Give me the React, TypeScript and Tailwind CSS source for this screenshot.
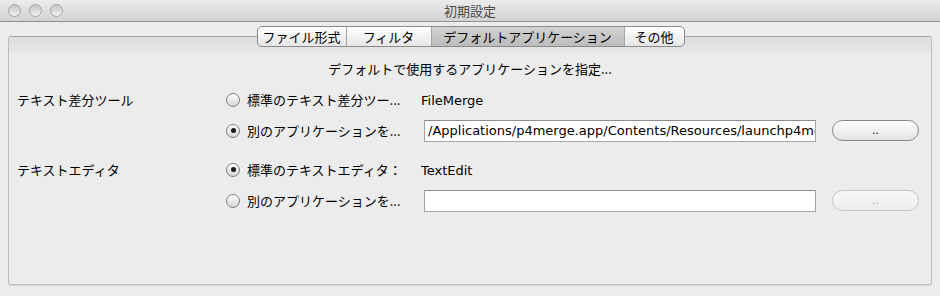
import type { ReactNode } from 'react'

const jp = 'font-["Noto_Sans_CJK_JP","Noto_Sans",sans-serif]'
const latin = 'font-["DejaVu_Sans","Noto_Sans_CJK_JP",sans-serif]'

function Radio({ checked, label }: { checked?: boolean; label: string }) {
  return (
    <div className="flex items-center gap-[7px] w-[195px] shrink-0">
      <span className="w-[14px] h-[14px] rounded-full border border-[#7e7e7e] bg-gradient-to-b from-[#ffffff] to-[#d6d6d6] flex items-center justify-center shrink-0">
        {checked && <span className="w-[5px] h-[5px] rounded-full bg-[#1a1a1a]" />}
      </span>
      <span className={`${jp} text-[13px] leading-none text-black whitespace-nowrap`}>{label}</span>
    </div>
  )
}

function PathField({ value }: { value?: string }) {
  return (
    <input
      readOnly
      value={value ?? ''}
      className={`${latin} ml-[3px] w-[392px] h-[22px] bg-white border border-[#a5a5a5] border-t-[#8c8c8c] pl-[3px] pr-0 text-[13px] text-black outline-none shrink-0`}
    />
  )
}

function Browse({ disabled }: { disabled?: boolean }) {
  return (
    <button
      className={`ml-[16px] w-[87px] h-[21px] rounded-full border flex items-center justify-center text-[11px] leading-none shrink-0 ${latin} ${
        disabled
          ? 'border-[#c4c4c4] bg-gradient-to-b from-[#f8f8f8] to-[#ececec] text-[#9a9a9a]'
          : 'border-[#858585] bg-gradient-to-b from-[#ffffff] to-[#e2e2e2] text-black'
      }`}
    >
      ..
    </button>
  )
}

function Row({ label, children }: { label?: string; children: ReactNode }) {
  return (
    <div className="flex items-center h-[31px]">
      <div className={`${jp} w-[209px] shrink-0 text-[13px] text-black whitespace-nowrap`}>{label}</div>
      {children}
    </div>
  )
}

const tabs = [
  { name: 'ファイル形式', w: 'w-[88px]' },
  { name: 'フィルタ', w: 'w-[85px]' },
  { name: 'デフォルトアプリケーション', w: 'w-[193px]', active: true },
  { name: 'その他', w: 'w-[60px]' },
]

export default function App() {
  return (
    <div className="w-[940px] h-[296px] bg-[#ececec] flex flex-col overflow-hidden">
      <div className="h-[22px] shrink-0 bg-gradient-to-b from-[#ececec] to-[#d2d2d2] border-b border-[#8f8f8f] relative flex items-center justify-center">
        <div className="absolute left-[8px] top-[4px] flex gap-[8px]">
          {[0, 1, 2].map((i) => (
            <span
              key={i}
              className="w-[13px] h-[13px] rounded-full border border-[#a3a3a3] bg-gradient-to-b from-[#c4c4c4] to-[#f2f2f2]"
            />
          ))}
        </div>
        <span className={`${jp} text-[13px] text-[#4a4a4a] leading-none`}>初期設定</span>
      </div>

      <div className="flex justify-center mt-[4px] relative z-10">
        <div className="flex h-[21px] rounded-[5px] border border-[#8a8a8a] overflow-hidden bg-gradient-to-b from-[#ffffff] to-[#e6e6e6] ml-[1px]">
          {tabs.map((t, i) => (
            <div
              key={t.name}
              className={`${t.w} ${jp} flex items-center justify-center text-[13px] text-black leading-none ${
                i > 0 ? 'border-l border-[#a6a6a6]' : ''
              } ${t.active ? 'bg-gradient-to-b from-[#d2d2d2] to-[#bcbcbc]' : ''}`}
            >
              {t.name}
            </div>
          ))}
        </div>
      </div>

      <div className="mx-[8px] -mt-[11px] h-[249px] border border-[#bdbdbd] border-t-[#a2a2a2] rounded-[3px] shadow-[0_1px_0_#dadada] flex flex-col">
        <div className="h-[16px] bg-gradient-to-b from-[#dedede] to-[#e6e6e6] shrink-0" />
        <div className={`${jp} text-center text-[13px] text-black mt-[7px] h-[18px] leading-[18px]`}>
          デフォルトで使用するアプリケーションを指定...
        </div>
        <div className="pl-[8px] mt-[6px] flex flex-col">
          <Row label="テキスト差分ツール">
            <Radio label="標準のテキスト差分ツー..." />
            <span className={`${latin} text-[13px] text-black pt-[2px]`}>FileMerge</span>
          </Row>
          <Row>
            <Radio checked label="別のアプリケーションを..." />
            <PathField value="/Applications/p4merge.app/Contents/Resources/launchp4merge" />
            <Browse />
          </Row>
          <div className="h-[8px]" />
          <Row label="テキストエディタ">
            <Radio checked label="標準のテキストエディタ：" />
            <span className={`${latin} text-[13px] text-black pt-[2px]`}>TextEdit</span>
          </Row>
          <Row>
            <Radio label="別のアプリケーションを..." />
            <PathField />
            <Browse disabled />
          </Row>
        </div>
      </div>
    </div>
  )
}
